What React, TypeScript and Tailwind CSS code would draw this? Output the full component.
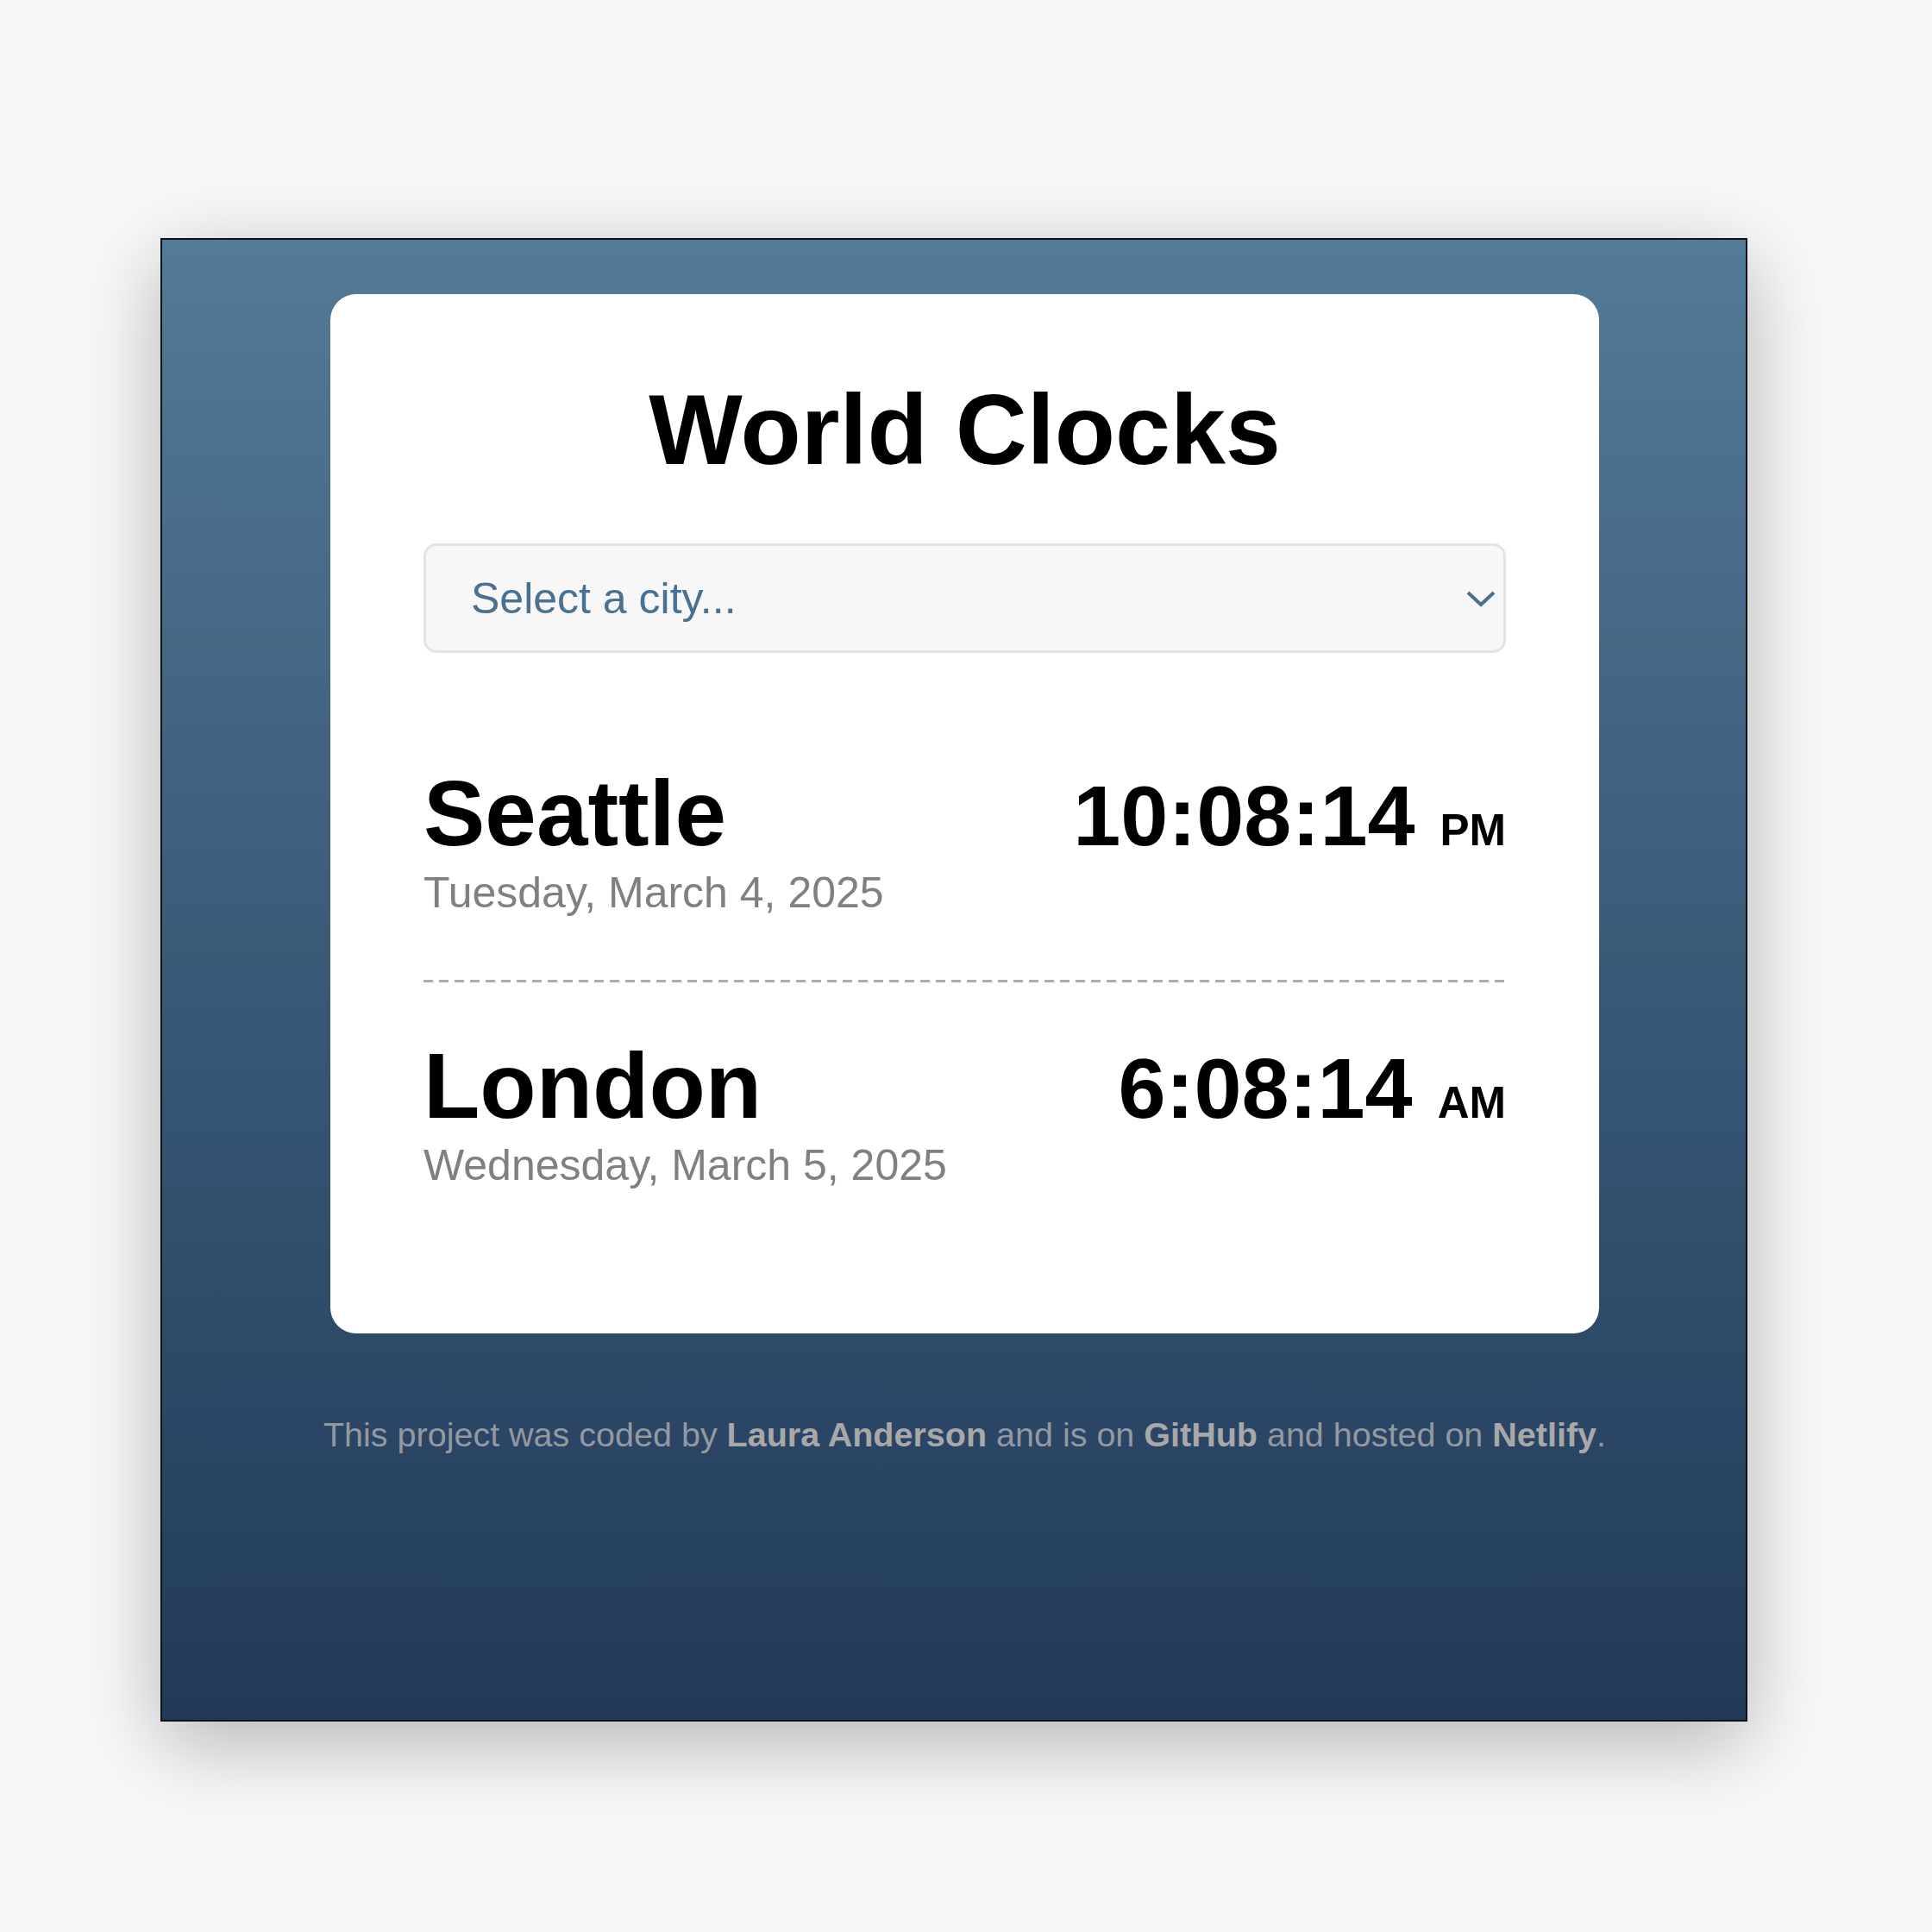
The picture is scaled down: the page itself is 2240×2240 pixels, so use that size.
import React from 'react';

const cities = [
  { name: 'Seattle', date: 'Tuesday, March 4, 2025', time: '10:08:14', period: 'PM' },
  { name: 'London', date: 'Wednesday, March 5, 2025', time: '6:08:14', period: 'AM' },
];

const App: React.FC = () => {
  return (
    <div className="min-h-[2240px] w-[2240px] bg-[#f7f8fa] pt-[276px] pl-[186px] font-['Liberation_Sans',Arial,sans-serif]">
      {/* Frame */}
      <div className="flex h-[1720px] w-[1840px] flex-col border-2 border-[#111] bg-gradient-to-b from-[#537a96] to-[#223a5a] pt-[63px] pl-[25px] shadow-[0_25px_90px_rgba(0,0,0,0.28)]">
        {/* Card */}
        <div className="mx-auto w-[1471px] rounded-[30px] bg-white px-[108px] pt-[100px] pb-[94px]">
          <h1 className="text-center text-[115px] font-bold leading-none text-black">World Clocks</h1>

          {/* City select */}
          <div className="mt-[74px] flex h-[127px] items-center justify-between rounded-[15px] border-[3px] border-[#e3e3e3] bg-[#f7f7f7] pl-[52px] pr-[9px]">
            <span className="text-[50px] leading-none text-[#4a7191]">Select a city...</span>
            <svg width="34" height="22" viewBox="0 0 34 22" fill="none">
              <path d="M2 4 L17 18 L32 4" stroke="#4a7191" strokeWidth="4" />
            </svg>
          </div>

          {/* Clock rows */}
          <div className="mt-[65px]">
            {cities.map((city, i) => (
              <div key={city.name}>
                {i > 0 && (
                  <div className="h-[3px] bg-[repeating-linear-gradient(90deg,#adadad_0_11px,transparent_11px_18px)]" />
                )}
                <div className={`${i > 0 ? 'pt-[67px]' : 'pt-[68px]'} pb-[76px]`}>
                  <div className="flex items-baseline justify-between">
                    <span className="text-[107px] font-bold leading-none text-black">{city.name}</span>
                    <span className="flex items-baseline font-bold leading-none text-black">
                      <span className="text-[99px]">{city.time}</span>
                      <span className="ml-[29px] text-[51px]">{city.period}</span>
                    </span>
                  </div>
                  <div className="mt-[13px] text-[50px] leading-none text-[#808080]">{city.date}</div>
                </div>
              </div>
            ))}
          </div>
        </div>

        {/* Footer */}
        <p className="mt-[98px] text-center text-[39.5px] leading-none text-[#9399a0]">
          This project was coded by <span className="font-bold text-[#a8a8a8]">Laura Anderson</span> and is on{' '}
          <span className="font-bold text-[#a8a8a8]">GitHub</span> and hosted on{' '}
          <span className="font-bold text-[#a8a8a8]">Netlify</span>.
        </p>
      </div>
    </div>
  );
};

export default App;
